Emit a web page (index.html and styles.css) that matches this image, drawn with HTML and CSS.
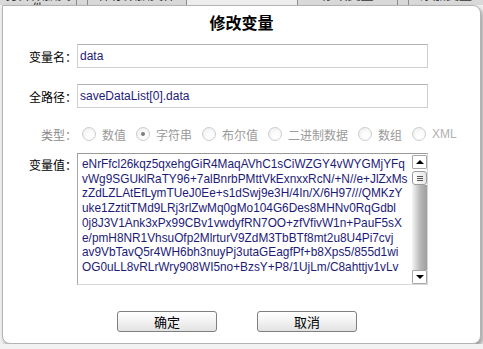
FILE: index.html
```html
<!DOCTYPE html>
<html lang="zh-CN">
<head>
  <meta charset="UTF-8">
  <title>修改变量</title>
  <link rel="stylesheet" href="styles.css">
</head>
<body>

  <div class="toolbar">
    <div class="tool t1"><span>打开数据文件</span></div>
    <div class="tool t2"><span>保存数据文件</span></div>
    <div class="tool t3"></div>
    <div class="tool t4"><span>修改变量</span></div>
    <div class="tool t5"><span>添加变量</span></div>
  </div>

  <div class="dialog">
    <h2 class="title">修改变量</h2>

    <div class="row row-name">
      <label class="label">变量名：</label>
      <div class="field">data</div>
    </div>

    <div class="row row-path">
      <label class="label">全路径：</label>
      <div class="field">saveDataList[0].data</div>
    </div>

    <div class="row row-type">
      <label class="label muted">类型：</label>
      <div class="radios">
        <span class="radio"></span><span class="opt">数值</span>
        <span class="radio checked"></span><span class="opt">字符串</span>
        <span class="radio"></span><span class="opt">布尔值</span>
        <span class="radio"></span><span class="opt">二进制数据</span>
        <span class="radio"></span><span class="opt">数组</span>
        <span class="radio"></span><span class="opt xml">XML</span>
      </div>
    </div>

    <div class="row row-value">
      <label class="label">变量值：</label>
      <div class="textbox">
        <div class="text">eNrFfcl26kqz5qxehgGiR4MaqAVhC1sCiWZGY4vWYGMjYFq
vWg9SGUklRaTY96+7alBnrbPMttVkExnxxRcN/+N//e+JlZxMs
zZdLZLAtEfLymTUeJ0Ee+s1dSwj9e3H/4In/X/6H97///QMKzY
uke1ZztitTMd9LRj3rlZwMq0gMo104G6Des8MHNv0RqGdbl
0j8J3V1Ank3xPx99CBv1vwdyfRN7OO+zfVfivW1n+PauF5sX
e/pmH8NR1VhsuOfp2MlrturV9ZdM3TbBTf8mt2u8U4Pi7cvj
av9VbTavQ5r4WH6bh3nuyPj3utaGEagfPf+b8Xps5/855d1wi
OG0uLL8vRLrWry908WI5no+BzsY+P8/1UjLm/C8ahttjv1vLv</div>
        <div class="scrollbar">
          <div class="arrow up"></div>
          <div class="thumb"><i></i><i></i><i></i></div>
          <div class="track"></div>
          <div class="arrow down"></div>
        </div>
      </div>
    </div>

    <div class="buttons">
      <button class="btn">确定</button>
      <button class="btn">取消</button>
    </div>
  </div>

</body>
</html>
```

FILE: styles.css
```css
body {
  margin: 0;
  background: #f2f2f2;
  font-family: "Liberation Sans", "Noto Sans CJK SC", sans-serif;
  font-size: 12px;
  color: #000;
  overflow: hidden;
}

/* page behind the dialog, only its bottom edge shows */
.toolbar {
  display: flex;
  height: 5px;
  overflow: hidden;
  background: #d9d9d9;
}
.tool {
  height: 5px;
  border-right: 1px solid #8c8c8c;
  overflow: hidden;
  text-align: center;
  font-size: 13px;
  color: #333;
}
.tool span {
  display: block;
  margin-top: -12px;
  line-height: 14px;
}
.t1 { width: 76px; }
.t2 { width: 98px; margin-left: 10px; border-left: 1px solid #8c8c8c; }
.t3 { width: 110px; background: #ededed; }
.t4 { width: 99px; }
.t5 { flex: 1; margin-left: 10px; border-left: 1px solid #8c8c8c; border-right: none; }

.dialog {
  margin-left: 2px;
  width: 477px;
  height: 337px;
  background: #fff;
  border: 1px solid #b4b4b4;
  border-radius: 0 8px 8px 8px;
  box-shadow: 2px 3px 4px rgba(0, 0, 0, 0.35);
}

.title {
  margin: 0;
  height: 32px;
  line-height: 32px;
  text-align: center;
  font-family: "Noto Sans CJK SC", sans-serif;
  font-size: 16px;
  font-weight: bold;
}

.row {
  display: flex;
  align-items: center;
}
.label {
  width: 74px;
  text-align: right;
  font-family: "Noto Sans CJK SC", sans-serif;
  font-size: 12px;
  flex-shrink: 0;
}
.muted {
  color: #8a8a8a;
}

.row-name { margin-top: 6px; }
.row-path { margin-top: 16px; }
.row-type { margin-top: 16px; height: 20px; }
.row-value { margin-top: 9px; align-items: flex-start; }
.row-value .label { padding-top: 3px; line-height: 18px; }

.field {
  width: 347px;
  height: 22px;
  line-height: 22px;
  padding-left: 2px;
  border: 1px solid #cfcfcf;
  border-top-color: #b4b4b4;
  color: #1d1b78;
}

.radios {
  display: flex;
  align-items: center;
  padding-left: 5px;
  color: #9a9a9a;
  font-family: "Noto Sans CJK SC", sans-serif;
}
.radio {
  width: 12px;
  height: 12px;
  border: 1px solid #cdcdcd;
  border-radius: 50%;
  background: radial-gradient(circle at 60% 65%, #fdfdfd 30%, #e9e9e9 100%);
  margin-right: 6px;
  display: flex;
  align-items: center;
  justify-content: center;
}
.radio.checked::after {
  content: "";
  width: 4px;
  height: 4px;
  border-radius: 50%;
  background: #7d7d7d;
}
.opt {
  margin-right: 10px;
}
.opt.xml {
  font-family: "Liberation Sans", sans-serif;
  color: #b0b0b0;
}

.textbox {
  display: flex;
  width: 349px;
  height: 130px;
  border: 1px solid #d8d8d8;
  border-top-color: #9a9a9a;
  border-left-color: #a8a8a8;
}
.text {
  flex: 1;
  padding: 3px 0 0 4px;
  white-space: pre;
  overflow: hidden;
  line-height: 14.7px;
  font-size: 11.85px;
  color: #1d1b78;
}

.scrollbar {
  width: 15px;
  display: flex;
  flex-direction: column;
  background: #fff;
}
.arrow {
  height: 12px;
  border: 1px solid #a8a8a8;
  border-radius: 1px;
  background: #fff;
  display: flex;
  align-items: center;
  justify-content: center;
}
.arrow.up { margin-top: 1px; }
.arrow.up::after {
  content: "";
  border-left: 4px solid transparent;
  border-right: 4px solid transparent;
  border-bottom: 4px solid #000;
}
.arrow.down::after {
  content: "";
  border-left: 4px solid transparent;
  border-right: 4px solid transparent;
  border-top: 4px solid #000;
}
.thumb {
  margin-top: 2px;
  height: 12px;
  border: 1px solid #9c9c9c;
  border-radius: 3px;
  background: linear-gradient(to right, #ffffff, #e6e6e6);
  display: flex;
  flex-direction: column;
  align-items: center;
  justify-content: center;
  gap: 1px;
}
.thumb i {
  width: 6px;
  height: 1px;
  background: #555;
}
.track {
  flex: 1;
  background: linear-gradient(to right, #f6f6f6, #b8b8b8 55%, #9e9e9e);
}

.buttons {
  display: flex;
  gap: 40px;
  margin-top: 26px;
  padding-left: 114px;
}
.btn {
  width: 100px;
  height: 21px;
  padding: 0;
  border: 1px solid #7f7f7f;
  border-radius: 3px;
  background: linear-gradient(#ffffff, #f2f2f2 50%, #e2e2e2);
  font-family: "Noto Sans CJK SC", sans-serif;
  font-size: 13px;
  color: #000;
}
```
